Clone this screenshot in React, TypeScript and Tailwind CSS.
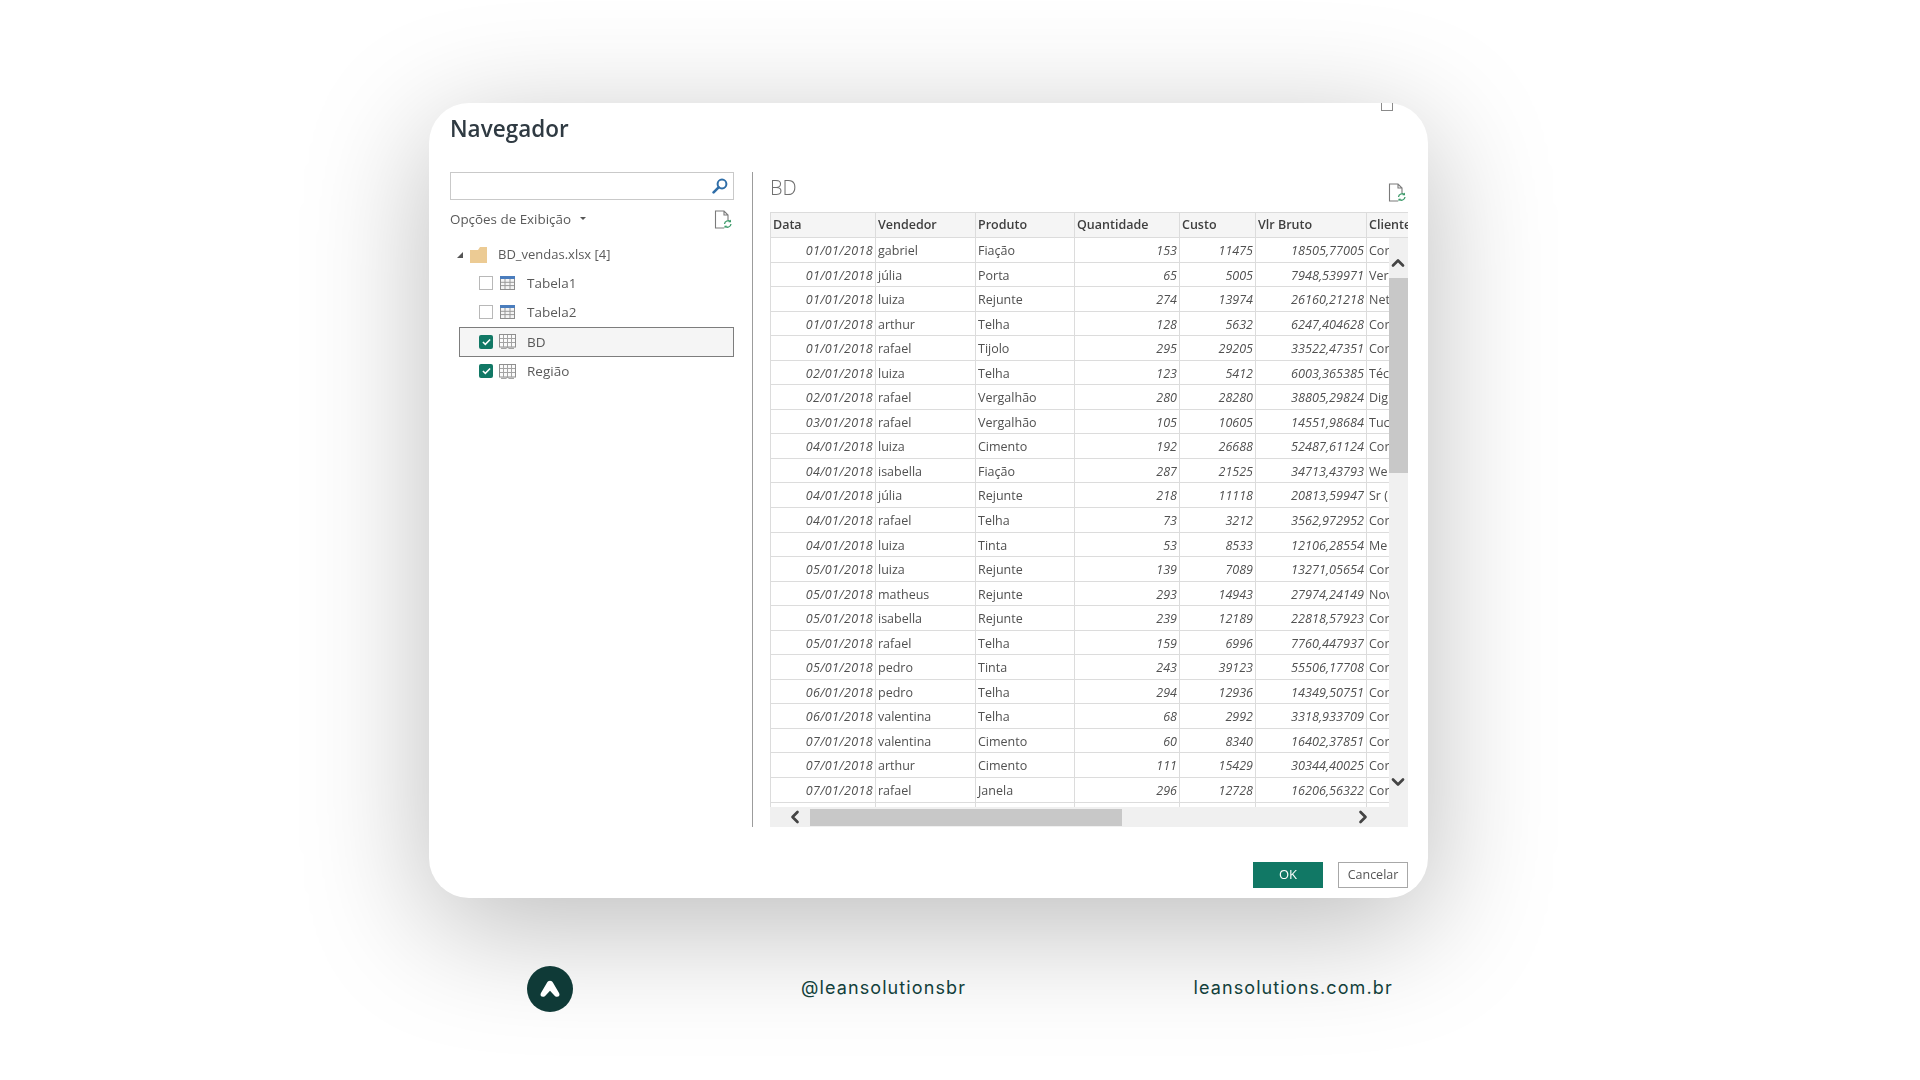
import { ChevronDown, ChevronLeft, ChevronRight, ChevronUp } from 'lucide-react'

const rows = [
  ['01/01/2018', 'gabriel', 'Fiação', '153', '11475', '18505,77005', 'Cor'],
  ['01/01/2018', 'júlia', 'Porta', '65', '5005', '7948,539971', 'Ver'],
  ['01/01/2018', 'luiza', 'Rejunte', '274', '13974', '26160,21218', 'Net'],
  ['01/01/2018', 'arthur', 'Telha', '128', '5632', '6247,404628', 'Cor'],
  ['01/01/2018', 'rafael', 'Tijolo', '295', '29205', '33522,47351', 'Cor'],
  ['02/01/2018', 'luiza', 'Telha', '123', '5412', '6003,365385', 'Téc'],
  ['02/01/2018', 'rafael', 'Vergalhão', '280', '28280', '38805,29824', 'Dig'],
  ['03/01/2018', 'rafael', 'Vergalhão', '105', '10605', '14551,98684', 'Tuc'],
  ['04/01/2018', 'luiza', 'Cimento', '192', '26688', '52487,61124', 'Cor'],
  ['04/01/2018', 'isabella', 'Fiação', '287', '21525', '34713,43793', 'We'],
  ['04/01/2018', 'júlia', 'Rejunte', '218', '11118', '20813,59947', 'Sr ('],
  ['04/01/2018', 'rafael', 'Telha', '73', '3212', '3562,972952', 'Cor'],
  ['04/01/2018', 'luiza', 'Tinta', '53', '8533', '12106,28554', 'Me'],
  ['05/01/2018', 'luiza', 'Rejunte', '139', '7089', '13271,05654', 'Cor'],
  ['05/01/2018', 'matheus', 'Rejunte', '293', '14943', '27974,24149', 'Nov'],
  ['05/01/2018', 'isabella', 'Rejunte', '239', '12189', '22818,57923', 'Cor'],
  ['05/01/2018', 'rafael', 'Telha', '159', '6996', '7760,447937', 'Cor'],
  ['05/01/2018', 'pedro', 'Tinta', '243', '39123', '55506,17708', 'Cor'],
  ['06/01/2018', 'pedro', 'Telha', '294', '12936', '14349,50751', 'Cor'],
  ['06/01/2018', 'valentina', 'Telha', '68', '2992', '3318,933709', 'Cor'],
  ['07/01/2018', 'valentina', 'Cimento', '60', '8340', '16402,37851', 'Cor'],
  ['07/01/2018', 'arthur', 'Cimento', '111', '15429', '30344,40025', 'Cor'],
  ['07/01/2018', 'rafael', 'Janela', '296', '12728', '16206,56322', 'Cor'],
  ['', '', '', '', '', '', ''],
]

const headers = ['Data', 'Vendedor', 'Produto', 'Quantidade', 'Custo', 'Vlr Bruto', 'Cliente']

function DocRefresh({ className }: { className?: string }) {
  return (
    <svg viewBox="0 0 18 19" className={className} fill="none">
      <path d="M10 18H1.5V1H10L14 5V10M10 1V5H14" stroke="#7a7a7a" strokeWidth="1.1" />
      <path d="M10.5 14a3.6 3.6 0 0 1 6-2.3M17 14a3.6 3.6 0 0 1-6 2.3" stroke="#3d9a6a" strokeWidth="1.3" />
      <path d="M17 9.6v2.6h-2.6zM10.5 18.4v-2.6h2.6z" fill="#3d9a6a" />
    </svg>
  )
}

function TableIcon() {
  return (
    <svg viewBox="0 0 15 14" className="w-[15px] h-[14px]" fill="none">
      <rect x="0.5" y="0.5" width="14" height="13" fill="#f4f4f4" stroke="#8d8d8d" />
      <rect x="0" y="0" width="15" height="3" fill="#4a7dbd" />
      <path d="M5 3v10M10 3v10M1 6.3h13M1 9.6h13" stroke="#9a9a9a" />
    </svg>
  )
}

function SheetIcon() {
  return (
    <svg viewBox="0 0 17 15" className="w-[17px] h-[15px]" fill="none">
      <rect x="0.5" y="0.5" width="16" height="12.5" fill="#fafafa" stroke="#8f8f8f" />
      <path d="M4.5 1v12M8.5 1v12M12.5 1v12M1 4.5h15M1 8.5h15" stroke="#a3a3a3" />
      <path d="M2 14.3h5l1.5-1M15 14.3h-5l-1.5-1" stroke="#8f8f8f" />
    </svg>
  )
}

function Box({ checked }: { checked?: boolean }) {
  if (checked) {
    return (
      <span className="w-[14px] h-[14px] rounded-[2px] bg-[#117865] flex items-center justify-center shrink-0">
        <svg viewBox="0 0 10 8" className="w-[9px] h-[8px]" fill="none">
          <path d="M1 4l2.7 2.6L9 1.2" stroke="#fff" strokeWidth="1.7" />
        </svg>
      </span>
    )
  }
  return <span className="w-[14px] h-[14px] border border-[#b8b8b8] bg-white shrink-0" />
}

function TreeItem({ label, checked, selected, sheet }: { label: string; checked?: boolean; selected?: boolean; sheet?: boolean }) {
  return (
    <div
      className={
        selected
          ? 'h-[29.4px] ml-[9px] pl-[19px] flex items-center border border-[#7d7d7d] bg-[#f5f5f5]'
          : 'h-[29.4px] ml-[9px] pl-[19px] flex items-center border border-transparent'
      }
    >
      <Box checked={checked} />
      <span className="ml-[6px] w-[17px] flex justify-center">{sheet ? <SheetIcon /> : <TableIcon />}</span>
      <span className="ml-[11px] text-[13.5px] text-[#5a5a5a]">{label}</span>
    </div>
  )
}

export default function App() {
  return (
    <div className="w-[1920px] h-[1080px] bg-white overflow-hidden pt-[103px] pl-[429px] font-['Open_Sans',sans-serif]">
      {/* dialog */}
      <div className="relative w-[999px] h-[795px] bg-white rounded-[40px] shadow-[0_28px_125px_rgba(0,0,0,0.27)] pl-[21px] pr-[20px] pt-[11px] flex flex-col">
        <span className="absolute top-0 right-[35px] w-[12px] h-[8px] border border-t-0 border-[#8a8a8a]" />
        <h1 className="h-[30px] leading-[30px] text-[22.5px] font-semibold text-[#2f3a42] mb-[28px] blur-[0.3px]">Navegador</h1>

        <div className="flex h-[655px] blur-[0.35px]">
          {/* left pane */}
          <div className="w-[284px] shrink-0">
            <div className="h-[28px] border border-[#c9c9c9] flex items-center justify-end pr-[5px]">
              <svg viewBox="0 0 16 16" className="w-[16px] h-[16px]" fill="none">
                <circle cx="10" cy="6" r="4.4" stroke="#2f6ea8" strokeWidth="2" />
                <path d="M6.6 9.4L1.6 14.4" stroke="#2f6ea8" strokeWidth="2.6" strokeLinecap="round" />
              </svg>
            </div>
            <div className="h-[39px] flex items-center justify-between">
              <span className="text-[13.4px] text-[#5a5a5a] flex items-center">
                Opções de Exibição
                <span className="ml-[9px] mb-[2px] w-0 h-0 border-x-[3px] border-x-transparent border-t-[3px] border-t-[#555]" />
              </span>
              <DocRefresh className="w-[18px] h-[19px] mr-[2px]" />
            </div>
            <div className="h-[29.4px] pt-[2px] flex items-center">
              <span className="ml-[7px] w-0 h-0 border-b-[6px] border-b-[#555] border-l-[6px] border-l-transparent" />
              <svg viewBox="0 0 18 16" className="ml-[7px] w-[18px] h-[16px]">
                <path d="M0 3h8l2-3h7v16H0z" fill="#eccb94" />
              </svg>
              <span className="ml-[10px] text-[13px] text-[#5a5a5a]">BD_vendas.xlsx [4]</span>
            </div>
            <TreeItem label="Tabela1" />
            <TreeItem label="Tabela2" />
            <TreeItem label="BD" checked selected sheet />
            <TreeItem label="Região" checked sheet />
          </div>

          <div className="ml-[18px] mr-[17px] w-[1px] bg-[#9c9c9c]" />

          {/* preview */}
          <div className="w-[638px] flex flex-col">
            <div className="h-[40px] flex justify-between">
              <span className="leading-[32px] text-[20px] font-light text-[#707070]">BD</span>
              <DocRefresh className="w-[18px] h-[19px] mt-[11px] mr-[2px]" />
            </div>
            <div className="h-[26px] grid grid-cols-[105px_100px_99px_105px_76px_111px_41px] bg-[#f5f5f5] border-t border-b border-l border-[#dcdcdc] overflow-hidden">
              {headers.map((h) => (
                <div key={h} className="pl-[2px] border-r border-[#dcdcdc] last:border-r-0 text-[12.5px] leading-[24px] font-semibold text-[#3f3f3f] whitespace-nowrap">
                  {h}
                </div>
              ))}
            </div>
            <div className="h-[569px] flex">
              <div className="w-[619px] overflow-hidden border-l border-[#dcdcdc]">
                {rows.map((r, i) => (
                  <div key={i} className="h-[24.55px] grid grid-cols-[105px_100px_99px_105px_76px_111px_22px] border-b border-[#dcdcdc] text-[12.5px] leading-[25px] text-[#505050]">
                    <div className="pr-[2px] text-right italic tracking-[0.35px] border-r border-[#dcdcdc]">{r[0]}</div>
                    <div className="pl-[2px] border-r border-[#dcdcdc]">{r[1]}</div>
                    <div className="pl-[2px] border-r border-[#dcdcdc]">{r[2]}</div>
                    <div className="pr-[2px] text-right italic border-r border-[#dcdcdc]">{r[3]}</div>
                    <div className="pr-[2px] text-right italic border-r border-[#dcdcdc]">{r[4]}</div>
                    <div className="pr-[2px] text-right italic text-[12.7px] border-r border-[#dcdcdc]">{r[5]}</div>
                    <div className="pl-[2px] overflow-hidden whitespace-nowrap">{r[6]}</div>
                  </div>
                ))}
              </div>
              {/* vertical scrollbar */}
              <div className="w-[19px] bg-[#f0f0f0] flex flex-col items-center">
                <div className="h-[40px] flex items-end pb-[5px] pr-[1px]">
                  <ChevronUp className="w-[20px] h-[20px] text-[#444]" strokeWidth={3.2} />
                </div>
                <div className="w-full h-[195px] bg-[#c8c8c8]" />
                <div className="flex-1 flex items-end pb-[15px] pr-[1px]">
                  <ChevronDown className="w-[20px] h-[20px] text-[#444]" strokeWidth={3.2} />
                </div>
              </div>
            </div>
            {/* horizontal scrollbar */}
            <div className="h-[20px] bg-[#f0f0f0] flex items-center">
              <ChevronLeft className="ml-[15px] w-[20px] h-[20px] text-[#444]" strokeWidth={3.2} />
              <div className="ml-[5px] w-[312px] h-[17px] bg-[#c8c8c8]" />
              <ChevronRight className="ml-[231px] w-[20px] h-[20px] text-[#444]" strokeWidth={3.2} />
            </div>
          </div>
        </div>

        <div className="mt-[35px] flex justify-end gap-[15px] blur-[0.3px]">
          <button className="w-[70px] h-[26px] bg-[#117865] text-white text-[13px]">OK</button>
          <button className="w-[70px] h-[26px] bg-white border border-[#a8a8a8] text-[#555] text-[12.5px]">Cancelar</button>
        </div>
      </div>

      {/* footer */}
      <div className="relative mt-[68px] flex items-center h-[46px] font-['Inter',sans-serif] text-[18px] text-[#123f3b] tracking-[1.1px]">
        <div className="ml-[98px] w-[46px] h-[46px] rounded-full bg-[#0f3a37] flex items-center justify-center">
          <svg viewBox="0 0 22 18" className="w-[20px] h-[20px]">
            <path d="M11 0c1.6 0 2.600.8 3.500 2.400L20.800 13c1.400 2.500.3 4.600-2 4.600-1.300 0-2.200-.6-3.200-1.700L11 11l-4.600 4.900c-1 1.100-1.900 1.700-3.200 1.700-2.300 0-3.400-2.100-2-4.600L7.500 2.400C8.400.8 9.400 0 11 0z" fill="#fff" />
          </svg>
        </div>
        <span className="ml-[228px] w-[392.5px] mb-[4px]">@leansolutionsbr</span>
        <span className="mb-[4px]">leansolutions.com.br</span>
      </div>
    </div>
  )
}
